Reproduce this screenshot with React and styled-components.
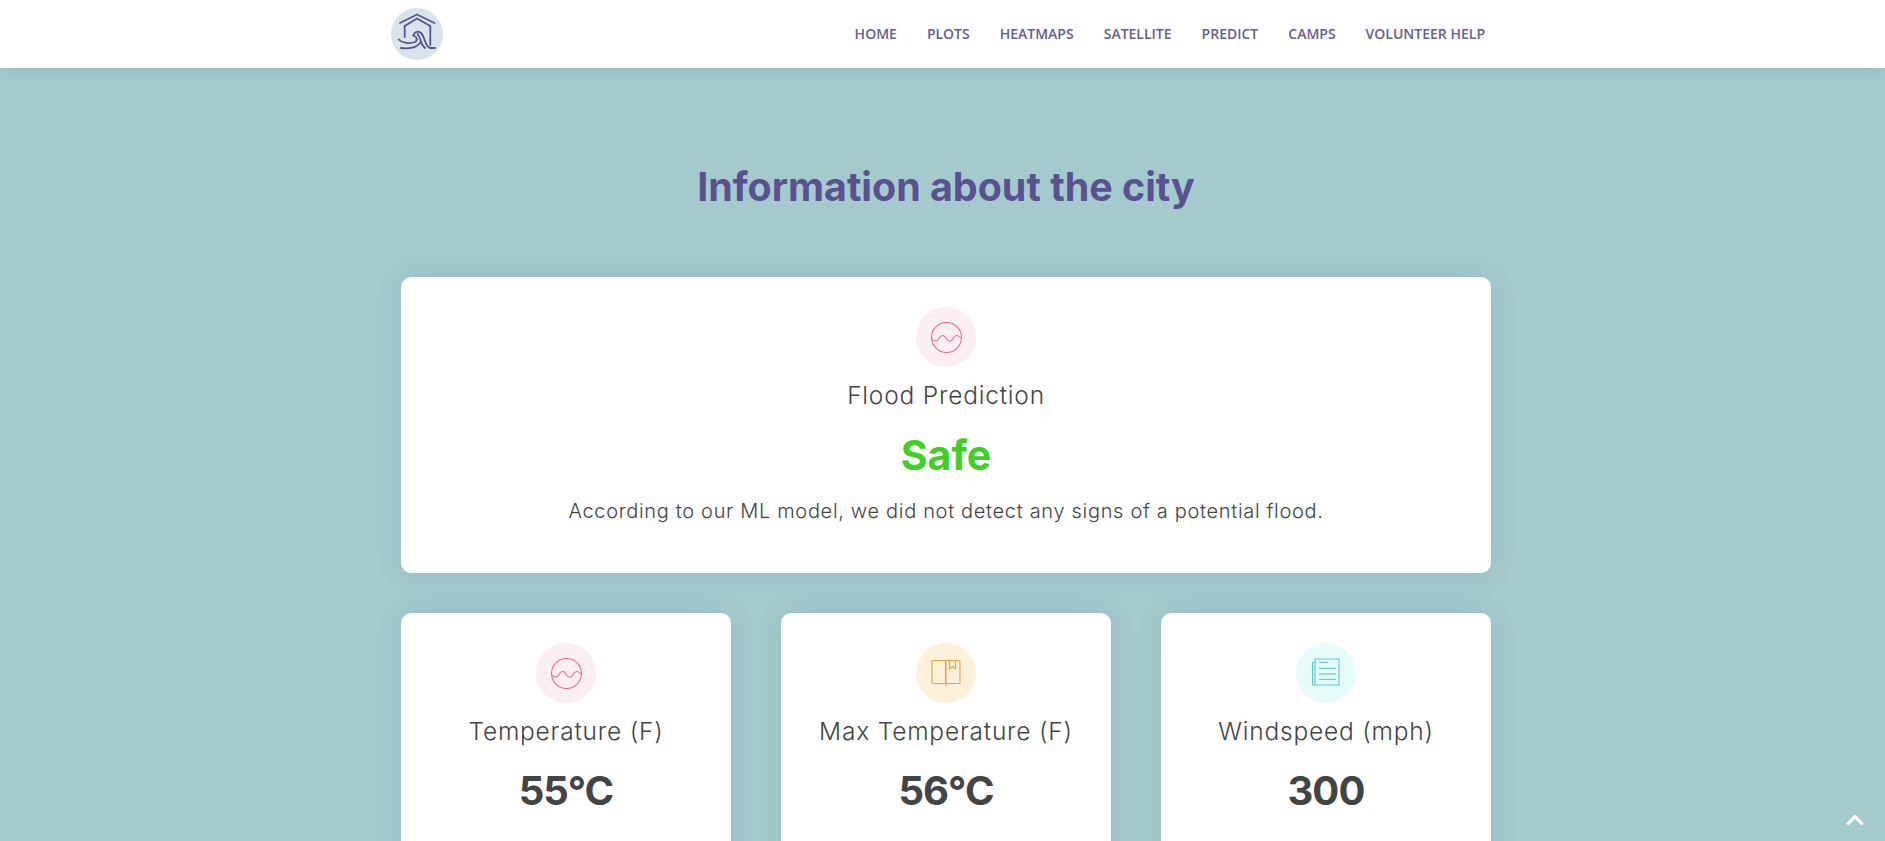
import React from 'react'
import styled, { createGlobalStyle } from 'styled-components'
import { FaChevronUp } from 'react-icons/fa'

const GlobalStyle = createGlobalStyle`
  html, body {
    margin: 0;
    padding: 0;
    height: 100%;
    overflow: hidden;
    background: #a4cacd;
  }
  body {
    font-family: 'Inter', 'Liberation Sans', sans-serif;
    color: #444444;
  }
`

const Header = styled.header`
  height: 68px;
  background: #ffffff;
  box-shadow: 0 2px 15px rgba(25, 60, 70, 0.1);
  position: relative;
  z-index: 2;
`

const HeaderInner = styled.div`
  width: 1095px;
  height: 100%;
  margin-left: 390px;
  display: flex;
  align-items: center;
  justify-content: space-between;
`

const Nav = styled.nav`
  display: flex;
  gap: 30px;
  margin-bottom: 1px;
`

const NavLink = styled.a`
  font-family: 'Open Sans', sans-serif;
  font-size: 14px;
  font-weight: 600;
  line-height: 20px;
  color: #655e8e;
  text-transform: uppercase;
  text-decoration: none;
`

const Main = styled.main`
  width: 1090px;
  margin-left: 401px;
`

const Title = styled.h1`
  margin: 0;
  padding: 96px 0 67px;
  font-size: 39.4px;
  font-weight: 700;
  line-height: 46px;
  text-align: center;
  color: #5a5190;
`

const Grid = styled.div`
  display: grid;
  grid-template-columns: repeat(3, 1fr);
  gap: 40px 50px;
`

const Card = styled.section`
  grid-column: ${({ $wide }) => ($wide ? '1 / -1' : 'auto')};
  min-height: ${({ $wide }) => ($wide ? '296px' : '300px')};
  box-sizing: border-box;
  padding-top: 30px;
  background: #ffffff;
  border-radius: 10px;
  box-shadow: 0 0 29px rgba(68, 88, 144, 0.12);
  display: flex;
  flex-direction: column;
  align-items: center;
  text-align: center;
`

const IconCircle = styled.div`
  width: 60px;
  height: 60px;
  border-radius: 50%;
  background: ${({ $bg }) => $bg};
  display: flex;
  align-items: center;
  justify-content: center;
`

const CardLabel = styled.h4`
  margin: 13px 0 0;
  font-size: 24.5px;
  font-weight: 300;
  line-height: 30px;
  letter-spacing: 0.8px;
  color: #444444;
`

const CardValue = styled.div`
  margin-top: 20px;
  font-size: ${({ $safe }) => ($safe ? '41px' : '40px')};
  font-weight: 700;
  line-height: 50px;
  letter-spacing: ${({ $safe }) => ($safe ? '0' : '-0.9px')};
  color: ${({ $safe }) => ($safe ? '#40d024' : '#444444')};
`

const CardText = styled.p`
  margin: 16px 0 0;
  font-size: 20px;
  font-weight: 300;
  line-height: 30px;
  letter-spacing: 0.68px;
  color: #444444;
`

const BackToTop = styled.a`
  position: fixed;
  right: 20px;
  bottom: 11px;
  color: #ffffff;
  font-size: 20px;
  line-height: 0;
`

const Logo = () => (
  <svg width="54" height="54" viewBox="0 0 54 54">
    <circle cx="27" cy="27" r="26" fill="#d8e4ea" />
    <g fill="none" stroke="#5a5390" strokeWidth="1.8" strokeLinecap="round" strokeLinejoin="round">
      <path d="M10 16 L27 7.5 L44.5 16" />
      <path d="M14.7 19 L27 11.5 L40.3 19" />
      <path d="M14.7 19 V30" />
      <path d="M40.3 19 V38" />
      <path d="M8.7 32.5 C12 36 20 37 25 35 C28 33.5 27 29.5 23.5 28.5" />
      <path d="M23.5 28.5 C24 25 28 23.5 31 26 C35 29.5 35 40 40 41 H45" />
      <path d="M11 41 C20 42 27 41 31 35" />
      <path d="M27.5 27 C31 31 30 37 35 41" />
    </g>
  </svg>
)

const WaveIcon = () => (
  <svg width="31" height="31" viewBox="0 0 31 31" fill="none" stroke="#ec6a9c" strokeWidth="1.1">
    <circle cx="15.5" cy="15.5" r="15" />
    <path d="M1 17 C3 19.5 6 20 8 16.5 C10 13 12.5 12.5 14.5 15.5 C16.5 19.5 20 21 22 16.5 C24 12.5 27 12.5 30 16" />
  </svg>
)

const BookIcon = () => (
  <svg width="30" height="30" viewBox="0 0 30 30" fill="none" stroke="#e9a24c" strokeWidth="1.1" strokeLinejoin="round">
    <path d="M2 2.5 H14.5 V25.5 H2 Q1 25.5 1 24.5 V3.5 Q1 2.5 2 2.5 Z" />
    <path d="M15.5 2.5 H28 Q29 2.5 29 3.5 V24.5 Q29 25.5 28 25.5 H15.5" />
    <path d="M15 2.5 V28" />
    <path d="M18.5 2.5 V11 L21.5 8.5 L24.5 11 V2.5" />
  </svg>
)

const NewsIcon = () => (
  <svg width="30" height="30" viewBox="0 0 30 30" fill="none" stroke="#5cc5c9" strokeWidth="1.1">
    <path d="M4 1 H28 V27 H4 Z" />
    <path d="M4 4.5 H1.5 V27 H4" />
    <path d="M8 4.3 H17" />
    <path d="M8 10.3 H25" />
    <path d="M8 16 H25" />
    <path d="M8 21.3 H25" />
  </svg>
)

const links = ['Home', 'Plots', 'Heatmaps', 'Satellite', 'Predict', 'Camps', 'Volunteer Help']

const stats = [
  { label: 'Temperature (F)', value: '55°C', bg: '#fdeef4', Icon: WaveIcon },
  { label: 'Max Temperature (F)', value: '56°C', bg: '#fff0da', Icon: BookIcon },
  { label: 'Windspeed (mph)', value: '300', bg: '#e6fdfc', Icon: NewsIcon },
]

const App = () => (
  <>
    <GlobalStyle />
    <Header>
      <HeaderInner>
        <Logo />
        <Nav>
          {links.map((link) => (
            <NavLink key={link} href="#">{link}</NavLink>
          ))}
        </Nav>
      </HeaderInner>
    </Header>
    <Main>
      <Title>Information about the city</Title>
      <Grid>
        <Card $wide>
          <IconCircle $bg="#fdeef4"><WaveIcon /></IconCircle>
          <CardLabel>Flood Prediction</CardLabel>
          <CardValue $safe>Safe</CardValue>
          <CardText>According to our ML model, we did not detect any signs of a potential flood.</CardText>
        </Card>
        {stats.map(({ label, value, bg, Icon }) => (
          <Card key={label}>
            <IconCircle $bg={bg}><Icon /></IconCircle>
            <CardLabel>{label}</CardLabel>
            <CardValue>{value}</CardValue>
          </Card>
        ))}
      </Grid>
    </Main>
    <BackToTop href="#"><FaChevronUp /></BackToTop>
  </>
)

export default App
